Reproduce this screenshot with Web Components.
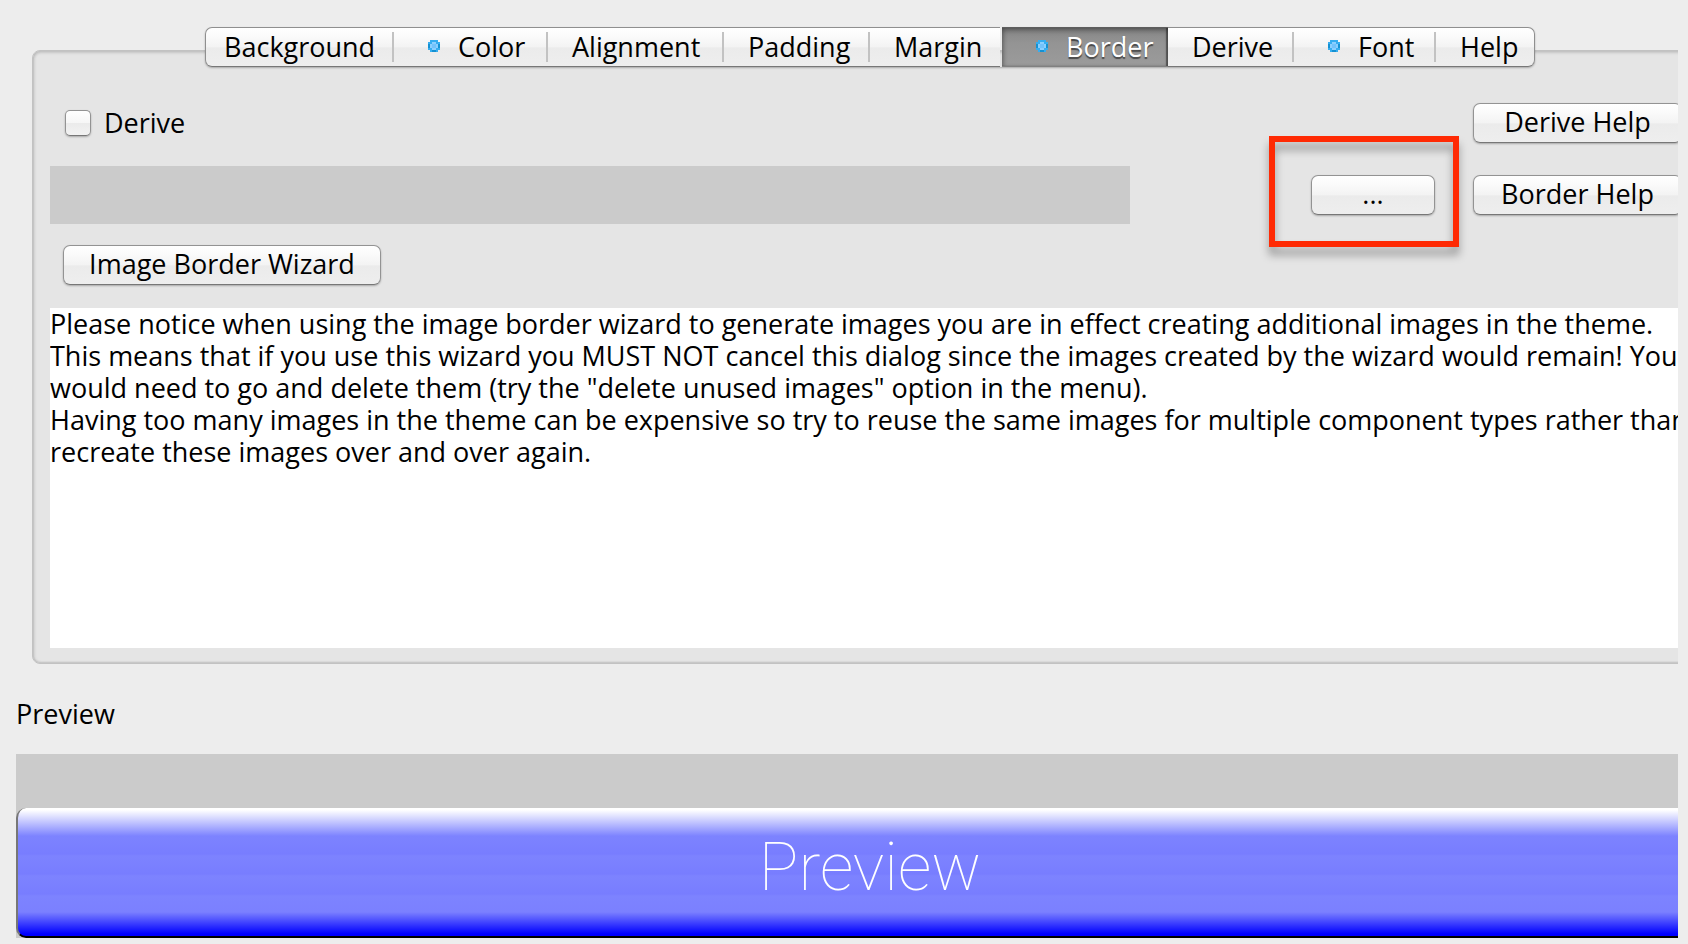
<!DOCTYPE html>
<html lang="en">
<head>
<meta charset="utf-8">
<title>Border style</title>
<style>
  body { margin: 0; background: #ededed; color: #000; font: 27px/32px "Open Sans", sans-serif; }
</style>
</head>
<body>
<style-editor></style-editor>

<script>
const define = (name, html, setup) => {
  const template = document.createElement('template');
  template.innerHTML = html;
  customElements.define(name, class extends HTMLElement {
    constructor() {
      super();
      this.attachShadow({ mode: 'open' }).append(template.content.cloneNode(true));
    }
    connectedCallback() { if (setup) setup(this, this.shadowRoot); }
  });
};

// Push button with the glossy two-tone face
define('aqua-button', `
  <style>
    :host { display: block; }
    button {
      box-sizing: border-box; display: block; width: 100%; height: 40px; padding: 0 0 2px;
      border: 1px solid #939393; border-bottom-color: #777; border-radius: 7px;
      background: linear-gradient(#fff 0, #fbfbfb 20%, #f3f3f3 50%, #ebebeb 52%, #eee 100%);
      box-shadow: 0 1px 2px #0004; color: inherit; font: inherit; white-space: nowrap;
    }
  </style>
  <button type="button"><slot></slot></button>`);

define('aqua-checkbox', `
  <style>
    :host { display: block; }
    label { display: flex; align-items: center; gap: 13px; }
    input {
      appearance: none; box-sizing: border-box; width: 26px; height: 26px; margin: 0;
      border: 1px solid #939393; border-bottom-color: #777; border-radius: 5px;
      background: linear-gradient(#fff 0, #f6f6f6 50%, #ebebeb 52%, #f2f2f2 100%);
      box-shadow: 0 1px 2px #0004;
    }
  </style>
  <label><input type="checkbox"><span><slot></slot></span></label>`);

// One segment of the tab strip; "marked" adds the dot of a customised attribute
define('tab-item', `
  <style>
    :host { display: block; flex: none; }
    button {
      position: relative; box-sizing: border-box; display: flex; align-items: center; width: 100%; height: 40px;
      padding: 0 0 0 24px; border: 0; color: inherit; font: inherit; white-space: nowrap;
      background: linear-gradient(#fff 0, #fbfbfb 20%, #f3f3f3 50%, #ebebeb 52%, #eee 100%);
      border-top: 1px solid #8f8f8f; border-bottom: 1px solid #777;
    }
    svg { display: none; margin: 0 18px 2px 10px; }
    :host([marked]) svg { display: block; }
    button::after { content: ""; position: absolute; right: 0; top: 4px; bottom: 4px; width: 2px; background: #c2c2c2; }
    :host([first]) button { padding-left: 18px; border-left: 1px solid #8f8f8f; border-radius: 7px 0 0 7px; }
    :host([last]) button { border-right: 1px solid #8f8f8f; border-radius: 0 7px 7px 0; }
    :host([last]) button::after, :host([selected]) button::after, :host([plain]) button::after { display: none; }
    :host([selected]) { margin-left: 2px; }
    :host([selected]) button {
      color: #fff; text-shadow: 0 2px 1px #0008;
      background: linear-gradient(#858585, #949494 40%, #9b9b9b);
      border-top-color: #5e5e5e; border-bottom-color: #808080;
      box-shadow: inset 0 3px 4px #0004, inset 3px 0 4px -1px #0003, inset -2px 0 1px #0006;
    }
  </style>
  <button type="button" role="tab">
    <svg width="12" height="12" viewBox="0 0 12 12" shape-rendering="crispEdges" aria-hidden="true">
      <path d="M2 0h8v2h2v8h-2v2H2v-2H0V2h2z" fill="#36adf0"/>
      <path d="M0 4h2v4H0zM10 4h2v4h-2zM4 10h4v2H4z" fill="#1591d2"/>
      <path d="M4 2h4v2h2v4H8v2H4V8H2V4h2z" fill="#8bcfff"/>
      <path d="M4 4h4v4H4z" fill="#72c2fb"/>
    </svg>
    <span><slot></slot></span>
  </button>`, (host, root) => {
    host.style.width = host.getAttribute('size') + 'px';
    root.querySelector('button').setAttribute('aria-selected', host.hasAttribute('selected'));
  });

define('tab-panel', `
  <style>
    :host { display: block; }
    .tabs { position: relative; display: flex; justify-content: center; }
    .tabs div { display: flex; border-radius: 7px; box-shadow: 0 1px 2px #0004; }
    .body {
      box-sizing: border-box; margin-top: -17px; padding: 52px 17px 15px;
      border: 1px solid #c2c2c2; border-radius: 8px; background: #e5e5e5;
      box-shadow: inset 0 2px 3px #0002, inset 2px 0 3px #0001, inset 0 -1px 2px #0002;
    }
  </style>
  <div class="tabs"><div role="tablist"><slot name="tab"></slot></div></div>
  <div class="body"><slot></slot></div>`);

// Red frame that calls attention to the slotted control
define('call-out', `
  <style>
    :host { position: relative; display: block; }
    i {
      position: absolute; inset: -39px -24px -32px -42px; border: 6px solid #ff2a04; pointer-events: none;
      filter: drop-shadow(0 8px 4px #0005);
    }
  </style>
  <slot></slot><i></i>`);

define('border-form', `
  <style>
    :host { display: block; }
    .grid { display: grid; grid-template-columns: minmax(0, 1fr) 124px 209px; column-gap: 38px; align-items: center; padding-right: 8px; }
    aqua-checkbox { margin-left: 15px; }
    .border { margin: 23px 0 21px; }
    .bar { height: 58px; margin-right: 143px; background: #cbcbcb; }
    .wizard { width: 318px; margin-left: 13px; }
    textarea {
      display: block; box-sizing: border-box; width: 100%; height: 340px; margin-top: 23px; padding: 0;
      border: 0; resize: none; overflow: hidden; background: #fff; color: inherit; font: inherit; white-space: pre;
    }
    .help { grid-column: 3; }
  </style>
  <div class="grid">
    <aqua-checkbox>Derive</aqua-checkbox>
    <aqua-button class="help">Derive Help</aqua-button>
  </div>
  <div class="grid border">
    <div class="bar"></div>
    <call-out><aqua-button>...</aqua-button></call-out>
    <aqua-button>Border Help</aqua-button>
  </div>
  <aqua-button class="wizard">Image Border Wizard</aqua-button>
  <textarea readonly aria-label="Notice" spellcheck="false">Please notice when using the image border wizard to generate images you are in effect creating additional images in the theme.
This means that if you use this wizard you MUST NOT cancel this dialog since the images created by the wizard would remain! You
would need to go and delete them (try the "delete unused images" option in the menu).
Having too many images in the theme can be expensive so try to reuse the same images for multiple component types rather than
recreate these images over and over again.</textarea>`);

define('style-preview', `
  <style>
    :host { display: block; }
    h2 { margin: 0 0 24px; font: inherit; }
    .stage { padding-top: 54px; background: #cbcbcb; }
    button {
      box-sizing: border-box; display: block; width: 100%; height: 130px; padding: 0 0 8px;
      border: 0 solid #000; border-width: 0 2px 2px; border-radius: 10px; border-left-color: #777;
      color: #fff; font: 100 66px/76px Roboto, sans-serif;
      background: linear-gradient(#fff 0, #fff 2px, #7d83ff 28px, #787dff 46px, #7d83ff 48px, #787dff 66px,
        #7d83ff 68px, #787dff 86px, #7d83ff 88px, #7b80ff 104px, #00f 126px, #00f 100%);
    }
  </style>
  <h2>Preview</h2>
  <div class="stage"><button type="button">Preview</button></div>`);

// The dialog runs wider than its viewport, which cuts it off on the right
define('style-editor', `
  <style>
    :host { display: block; margin: 0 10px 0 16px; overflow: hidden; }
    main { width: calc(100% + 46px); padding: 27px 0 7px; }
    tab-panel { margin: 0 16px 34px; }
  </style>
  <main>
    <tab-panel>
      <tab-item slot="tab" first size="189">Background</tab-item>
      <tab-item slot="tab" marked size="154">Color</tab-item>
      <tab-item slot="tab" size="176">Alignment</tab-item>
      <tab-item slot="tab" size="146">Padding</tab-item>
      <tab-item slot="tab" plain size="130">Margin</tab-item>
      <tab-item slot="tab" marked selected size="166">Border</tab-item>
      <tab-item slot="tab" size="126">Derive</tab-item>
      <tab-item slot="tab" marked size="142">Font</tab-item>
      <tab-item slot="tab" last size="99">Help</tab-item>
      <border-form></border-form>
    </tab-panel>
    <style-preview></style-preview>
  </main>`);
</script>
</body>
</html>
